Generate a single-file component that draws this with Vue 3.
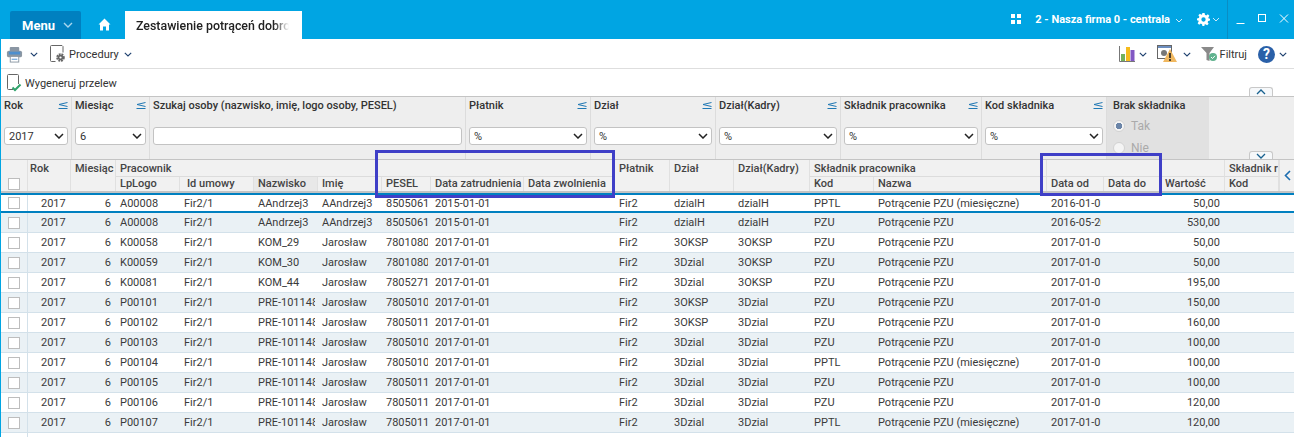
<script setup>
const cols = [27, 43, 45, 64, 74, 64, 64, 49, 93, 91, 55, 64, 76, 64, 173, 57, 57, 64, 54];
const grid = { gridTemplateColumns: cols.map((c) => c + 'px').join(' ') };
const mk = (lp, nz, im, pe, zat, d1, d2, kod, wart, od) => ({ lp, nz, im, pe, zat, d1, d2, kod, wart, od });
const rows = [
  mk('A00008', 'AAndrzej3', 'AAndrzej3', '8505061', '2015-01-01', 'dzialH', 'dzialH', 'PPTL', '50,00', '2016-01-01'),
  mk('A00008', 'AAndrzej3', 'AAndrzej3', '8505061', '2015-01-01', 'dzialH', 'dzialH', 'PZU', '530,00', '2016-05-20'),
  mk('K00058', 'KOM_29', 'Jarosław', '7801080', '2017-01-01', '3OKSP', '3OKSP', 'PZU', '50,00', '2017-01-01'),
  mk('K00059', 'KOM_30', 'Jarosław', '7801080', '2017-01-01', '3Dzial', '3OKSP', 'PZU', '50,00', '2017-01-01'),
  mk('K00081', 'KOM_44', 'Jarosław', '7805271', '2017-01-01', '3Dzial', '3OKSP', 'PZU', '195,00', '2017-01-01'),
  mk('P00101', 'PRE-101148', 'Jarosław', '7805010', '2017-01-01', '3OKSP', '3Dzial', 'PZU', '150,00', '2017-01-01'),
  mk('P00102', 'PRE-101148', 'Jarosław', '7805011', '2017-01-01', '3OKSP', '3Dzial', 'PZU', '160,00', '2017-01-01'),
  mk('P00103', 'PRE-101148', 'Jarosław', '7805010', '2017-01-01', '3Dzial', '3Dzial', 'PZU', '100,00', '2017-01-01'),
  mk('P00104', 'PRE-101148', 'Jarosław', '7805010', '2017-01-01', '3Dzial', '3Dzial', 'PPTL', '100,00', '2017-01-01'),
  mk('P00105', 'PRE-101148', 'Jarosław', '7805011', '2017-01-01', '3Dzial', '3Dzial', 'PZU', '100,00', '2017-01-01'),
  mk('P00106', 'PRE-101148', 'Jarosław', '7805011', '2017-01-01', '3Dzial', '3Dzial', 'PZU', '120,00', '2017-01-01'),
  mk('P00107', 'PRE-101148', 'Jarosław', '7805011', '2017-01-01', '3Dzial', '3Dzial', 'PPTL', '120,00', '2017-01-01'),
];
const nazwa = (k) => (k === 'PPTL' ? 'Potrącenie PZU (miesięczne)' : 'Potrącenie PZU');
const filters = [
  { label: 'Rok', w: 71, value: '2017', sel: true },
  { label: 'Miesiąc', w: 78, value: '6', sel: true },
  { label: 'Szukaj osoby (nazwisko, imię, logo osoby, PESEL)', w: 316, input: true },
  { label: 'Płatnik', w: 125, value: '%', sel: true },
  { label: 'Dział', w: 125, value: '%', sel: true },
  { label: 'Dział(Kadry)', w: 125, value: '%', sel: true },
  { label: 'Składnik pracownika', w: 141, value: '%', sel: true },
  { label: 'Kod składnika', w: 125, value: '%', sel: true },
];
const heads = [
  ['LpLogo', 'l2'], ['Id umowy', 'l2 ctr'], ['Nazwisko', 'l2 hot'], ['Imię', 'l2'], ['PESEL', 'l2'],
  ['Data zatrudnienia', 'l2'], ['Data zwolnienia', 'l2'],
];
</script>

<template>
  <div class="app">
    <header class="titlebar">
      <button class="menu">Menu
        <svg width="10" height="6" viewBox="0 0 10 6"><path d="M1 1l4 4 4-4" fill="none" stroke="#a9d6ee" stroke-width="1.4"/></svg>
      </button>
      <svg class="home" width="13" height="13" viewBox="0 0 13 13"><path d="M6.5 .5L0.500 6.500H2v6h3V8.500h3v4h3v-6h1.500z" fill="#fff"/></svg>
      <div class="tab"><span>Zestawienie potrąceń dobro</span></div>
      <div class="spacer"></div>
      <svg class="top apps" width="10" height="10" viewBox="0 0 10 10" fill="#fff"><rect width="4" height="4"/><rect x="6" width="4" height="4"/><rect y="6" width="4" height="4"/><rect x="6" y="6" width="4" height="4"/></svg>
      <span class="firm">2 - Nasza firma 0 - centrala</span>
      <svg class="top fchev" width="8" height="5" viewBox="0 0 8 5"><path d="M1 1l3 3 3-3" fill="none" stroke="#cdeafa" stroke-width="1"/></svg>
      <svg class="top gear" width="13" height="13" viewBox="0 0 24 24"><path fill="#fff" fill-rule="evenodd" d="M10 0h4l.7 3.400 2.300 1 3-1.900 2.800 2.800-1.900 3 1 2.300L24 10v4l-3.400.7-1 2.300 1.900 3-2.800 2.800-3-1.900-2.300 1L14 24h-4l-.7-3.400-2.300-1-3 1.900-2.800-2.800 1.900-3-1-2.300L0 14v-4l3.400-.7 1-2.300-1.900-3L5.300 1.200l3 1.900 1-.9.700-2.200zM12 8a4 4 0 100 8 4 4 0 000-8z"/></svg>
      <svg class="top gchev" width="8" height="5" viewBox="0 0 8 5"><path d="M1 1l3 3 3-3" fill="none" stroke="#cdeafa" stroke-width="1"/></svg>
      <div class="winctl">
        <svg width="10" height="10" viewBox="0 0 10 10"><path d="M1.500 9.500h8" stroke="#fff"/></svg>
        <svg width="10" height="10" viewBox="0 0 10 10"><rect x="1.500" y=".5" width="7" height="7" fill="none" stroke="#fff"/></svg>
        <svg width="10" height="10" viewBox="0 0 10 10"><path d="M1 .5l8 8M9 .5l-8 8" stroke="#fff" fill="none"/></svg>
      </div>
    </header>

    <div class="main">
      <div class="toolbar">
        <svg width="17" height="17" viewBox="0 0 18 18">
          <rect x="4" y="1" width="10" height="5" rx="1" fill="#8a96a3"/>
          <rect x="1" y="5" width="16" height="7" rx="2" fill="#8b97a3"/>
          <rect x="3" y="6" width="12" height="3" fill="#4d8fce"/>
          <rect x="4.500" y="11" width="9" height="6" fill="#fff" stroke="#8b97a3"/>
          <path d="M6 14h6" stroke="#4d8fce"/>
        </svg>
        <svg class="chev pchev" width="8" height="5" viewBox="0 0 8 5"><path d="M.8.8L4 4l3.200-3.200" fill="none" stroke="#1d3f6e" stroke-width="1.100"/></svg>
        <svg class="proc" width="16" height="18" viewBox="0 0 16 18">
          <path d="M8 .5H1.500a1 1 0 00-1 1v14a1 1 0 001 1h4M8 .5h4l1 1v6" fill="none" stroke="#666"/>
          <circle cx="10.500" cy="12.500" r="3.200" fill="none" stroke="#666" stroke-width="2.200" stroke-dasharray="1.800 .8"/>
          <circle cx="10.500" cy="12.500" r="2.800" fill="#666"/><circle cx="10.500" cy="12.500" r="1.100" fill="#fff"/>
        </svg>
        <span class="tlabel">Procedury</span>
        <svg class="chev" width="8" height="5" viewBox="0 0 8 5"><path d="M.8.8L4 4l3.200-3.200" fill="none" stroke="#1d3f6e" stroke-width="1.100"/></svg>
        <div class="spacer"></div>
        <svg class="bars" width="16" height="16" viewBox="0 0 16 16">
          <path d="M.5 0v15.500H16" fill="none" stroke="#777"/>
          <rect x="2" y="8" width="4" height="7" fill="#72b05d"/>
          <rect x="7" y="1" width="4" height="14" fill="#f5bb1c"/>
          <rect x="11.500" y="4" width="4" height="11" fill="#8258c4"/>
        </svg>
        <svg class="chev" width="8" height="5" viewBox="0 0 8 5"><path d="M.8.8L4 4l3.200-3.200" fill="none" stroke="#1d3f6e" stroke-width="1.100"/></svg>
        <svg class="warn" width="20" height="18" viewBox="0 0 20 18">
          <rect x=".5" y=".5" width="14" height="13" fill="#fff" stroke="#666"/>
          <rect x="1" y="1" width="13" height="2" fill="#6c8ebf"/>
          <circle cx="7" cy="8" r="3" fill="#777"/>
          <path d="M13 4l7 13H6z" fill="#f0b860"/>
          <path d="M13 8v5M13 14v2" stroke="#222" stroke-width="1.600"/>
        </svg>
        <svg class="chev c3" width="8" height="5" viewBox="0 0 8 5"><path d="M.8.8L4 4l3.200-3.200" fill="none" stroke="#1d3f6e" stroke-width="1.100"/></svg>
        <svg class="funnel" width="18" height="16" viewBox="0 0 18 16">
          <path d="M0 1h13L8.500 7v8l-3-1V7z" fill="#8a8a8a"/>
          <circle cx="12" cy="11" r="4" fill="#5fb28d"/>
          <path d="M10 11l1.500 1.500L14 9.800" stroke="#fff" fill="none"/>
        </svg>
        <span class="tlabel filt">Filtruj</span>
        <span class="help">?</span>
        <svg class="chev c4" width="8" height="5" viewBox="0 0 8 5"><path d="M.8.8L4 4l3.200-3.200" fill="none" stroke="#1d3f6e" stroke-width="1.100"/></svg>
      </div>

      <div class="actions">
        <svg width="18" height="18" viewBox="0 0 18 18">
          <path d="M6 15.500H1.500a1 1 0 01-1-1V1.500a1 1 0 011-1h9a1 1 0 011 1V10" fill="none" stroke="#666"/>
          <path d="M5.500 13.500l2.500 2.500 5.500-5.500" fill="none" stroke="#2fa36b" stroke-width="2"/>
        </svg>
        <span class="tlabel">Wygeneruj przelew</span>
        <span class="collapse up"><svg width="10" height="6" viewBox="0 0 10 6"><path d="M1 5l4-4 4 4" fill="none" stroke="#17618f" stroke-width="1.300"/></svg></span>
      </div>

      <section class="filters">
        <div v-for="f in filters" :key="f.label" class="filter" :style="{ width: f.w + 'px' }">
          <div class="flabel">
            <span>{{ f.label }}</span>
            <svg v-if="f.sel" width="10" height="7" viewBox="0 0 10 7"><path d="M9.500.5L1 2.500l8.500 2M.5 6.500h9" fill="none" stroke="#1f78b4"/></svg>
          </div>
          <div class="fctl">
            <span class="fval">{{ f.value }}</span>
            <svg v-if="f.sel" width="10" height="6" viewBox="0 0 10 6"><path d="M1 1l4 4 4-4" fill="none" stroke="#222" stroke-width="1.500"/></svg>
          </div>
        </div>
        <div class="filter off">
          <div class="flabel"><span>Brak składnika</span></div>
          <label class="radio"><i class="on"></i>Tak</label>
          <label class="radio"><i></i>Nie</label>
        </div>
        <div class="frest"></div>
        <span class="collapse down"><svg width="10" height="6" viewBox="0 0 10 6"><path d="M1 1l4 4 4-4" fill="none" stroke="#17618f" stroke-width="1.300"/></svg></span>
      </section>

      <section class="table">
        <div class="thead" :style="grid">
          <div class="th cb"><i class="check"></i></div>
          <div class="th tall rok">Rok</div>
          <div class="th tall">Miesiąc</div>
          <div class="th group" style="grid-column: span 7">Pracownik</div>
          <div class="th tall" >Płatnik</div>
          <div class="th tall">Dział</div>
          <div class="th tall">Dział(Kadry)</div>
          <div class="th group" style="grid-column: span 2">Składnik pracownika</div>
          <div class="th group" style="grid-column: span 3"></div>
          <div class="th group clip">Składnik r</div>
          <div v-for="h in heads" :key="h[0]" class="th" :class="h[1]">{{ h[0] }}</div>
          <div class="th l2">Kod</div>
          <div class="th l2">Nazwa</div>
          <div class="th l2">Data od</div>
          <div class="th l2">Data do</div>
          <div class="th l2">Wartość</div>
          <div class="th l2">Kod</div>
        </div>
        <div class="tbody">
          <div v-for="(r, i) in rows" :key="i" class="row" :class="{ alt: i % 2 === 1, cur: i === 0 }" :style="grid">
            <div class="td cb"><i class="check"></i></div>
            <div class="td ctr">2017</div>
            <div class="td rt">6</div>
            <div class="td">{{ r.lp }}</div>
            <div class="td">Fir2/1</div>
            <div class="td">{{ r.nz }}</div>
            <div class="td">{{ r.im }}</div>
            <div class="td">{{ r.pe }}</div>
            <div class="td">{{ r.zat }}</div>
            <div class="td"></div>
            <div class="td">Fir2</div>
            <div class="td">{{ r.d1 }}</div>
            <div class="td">{{ r.d2 }}</div>
            <div class="td">{{ r.kod }}</div>
            <div class="td">{{ nazwa(r.kod) }}</div>
            <div class="td">{{ r.od }}</div>
            <div class="td"></div>
            <div class="td rt">{{ r.wart }}</div>
            <div class="td"></div>
          </div>
          <div class="rowend"></div>
        </div>
        <div class="side"><svg width="7" height="11" viewBox="0 0 7 11"><path d="M6 1L1.500 5.500 6 10" fill="none" stroke="#1c6db0" stroke-width="1.600"/></svg></div>
      </section>

      <div class="mark m1"></div>
      <div class="mark m2"></div>
    </div>
  </div>
</template>

<style scoped>
.app { width: 1294px; height: 437px; overflow: hidden; font: 11px Roboto, sans-serif; color: #333; background: #fff; display: flex; flex-direction: column; }
.spacer { flex: 1; }
.titlebar { height: 39px; flex: none; background: #00a5e3; display: flex; align-items: flex-end; padding-left: 10px; }
.menu { width: 71px; height: 28px; background: #0080c0; border: 0; border-radius: 2px 2px 0 0; color: #fff; font: 700 13px Roboto, sans-serif; display: flex; align-items: center; gap: 8px; padding: 0 0 0 12px; }
.home { margin: 0 0 8px 17px; }
.tab { margin-left: 14px; width: 177px; height: 28px; background: #fff; color: #222; font-weight: 500; font-size: 12.4px; display: flex; align-items: center; padding-left: 11px; box-sizing: border-box; }
.tab span { width: 153px; white-space: nowrap; overflow: hidden; -webkit-mask-image: linear-gradient(90deg, #000 90%, transparent); mask-image: linear-gradient(90deg, #000 90%, transparent); }
.top { align-self: flex-start; flex: none; }
.apps { margin-top: 14px; }
.firm { align-self: flex-start; margin: 12px 0 0 14px; color: #fff; font-weight: 700; font-size: 11px; line-height: 15px; white-space: nowrap; }
.fchev { margin: 18px 0 0 5px; }
.gear { margin: 13px 0 0 14px; }
.gchev { margin: 17px 0 0 2px; }
.winctl { align-self: flex-start; height: 39px; margin-left: 7px; width: 67px; border-left: 1px solid #0a8dc4; box-sizing: border-box; padding: 14px 0 0 7px; display: flex; gap: 12px; }
.winctl svg { flex: none; }
.main { position: relative; flex: 1; border-left: 1px solid #00a5e3; min-height: 0; }
.toolbar { height: 30px; box-sizing: border-box; border-bottom: 1px solid #dedede; display: flex; align-items: center; padding: 1px 7px 0 5px; }
.chev { flex: none; }
.pchev { margin-left: 7px; }
.proc { margin-left: 12px; }
.tlabel { color: #333; font-size: 11px; white-space: nowrap; }
.toolbar .tlabel { margin: 0 5px 0 3px; }
.bars { margin-right: 4px; }
.warn { margin-left: 10px; }
.c3 { margin-left: 6px; }
.funnel { margin-left: 10px; }
.toolbar .filt { margin: 0 0 0 1px; }
.help { margin-left: 11px; width: 17px; height: 17px; border-radius: 50%; background: #2a60a8; color: #fff; font: 700 14px/17px Roboto, sans-serif; text-align: center; }
.c4 { margin-left: 4px; }
.actions { height: 28px; box-sizing: border-box; border-bottom: 1px solid #c4c4c4; display: flex; align-items: center; padding: 1px 0 0 6px; position: relative; }
.collapse { position: absolute; width: 24px; border: 1px solid #c8c8c8; border-bottom: 0; border-radius: 3px 3px 0 0; background: #f6f8fa; right: 21px; bottom: 0; display: flex; align-items: center; justify-content: center; box-sizing: border-box; }
.collapse.up { height: 9px; }
.collapse.down { height: 8px; }
.filters { height: 63px; background: #eeeeee; border-bottom: 1px solid #c4c4c4; box-sizing: border-box; display: flex; position: relative; }
.filter { flex: none; box-sizing: border-box; border-right: 1px solid #dcdcdc; padding: 1px 3px 0 3px; }
.flabel { display: flex; justify-content: space-between; align-items: center; font-weight: 500; color: #333; height: 15px; line-height: 15px; white-space: nowrap; }
.fctl { margin-top: 14px; height: 18px; background: #fff; border: 1px solid #c3c3c3; border-radius: 3px; box-sizing: border-box; display: flex; align-items: center; justify-content: space-between; padding: 0 3px 0 4px; }
.fval { color: #333; }
.off { width: 102px; background: #e1e1e1; border-right: 0; padding-left: 6px; overflow: hidden; }
.off .flabel { margin-bottom: 2px; }
.frest { flex: 1; }
.radio { display: flex; align-items: center; gap: 6px; color: #aaa; height: 22px; font-size: 12px; }
.radio i { width: 12px; height: 12px; border-radius: 50%; background: #f4f4f4; border: 1px solid #d2d2d2; box-sizing: border-box; display: block; }
.radio i.on { background: radial-gradient(circle, #6b85a8 0 3px, #f4f4f4 3.500px); }
.table { position: relative; height: 277px; overflow: hidden; }
.thead { display: grid; grid-template-rows: 17px 14px; height: 31px; background: #f1f1f1; }
.th { font-weight: 500; color: #444; padding: 1px 0 0 4px; line-height: 15px; white-space: nowrap; overflow: hidden; border-right: 1px solid #e0e0e0; box-sizing: border-box; }
.th.tall, .th.cb { grid-row: span 2; }
.th.cb { padding: 18px 0 0 7px; }
.th.rok { padding-left: 2px; }
.th.group { border-bottom: 1px solid #dcdcdc; }
.th.l2 { line-height: 14px; padding-top: 0; }
.th.ctr { padding-left: 7px; }
.th.hot { background: #e8e8e8; }
.tbody { border-top: 2px solid #c4c4c4; position: relative; }
.row { display: grid; height: 20px; box-sizing: border-box; border-bottom: 1px solid #d3e1ea; background: #fff; }
.row.alt { background: #eaf1f5; }
.row.cur { border-top: 2px solid #0080c0; border-bottom: 2px solid #0080c0; }
.td { padding: 0 0 0 4px; border-right: 3px solid transparent; line-height: 20px; overflow: hidden; white-space: nowrap; color: #3a3a3a; box-sizing: border-box; }
.cur .td { line-height: 17px; }
.td.cb { border-right: 1px solid #d3e1ea; padding: 4px 0 0 7px; }
.cur .td.cb { padding-top: 2px; }
.td.ctr { padding-left: 13px; }
.td.rt { text-align: right; padding-right: 2px; }
.check { display: block; width: 12px; height: 12px; background: #fff; border: 1px solid #bdbdbd; box-sizing: border-box; }
.rowend { width: 27px; height: 4px; border-right: 1px solid #d3e1ea; box-sizing: border-box; }
.side { position: absolute; right: 0; top: 0; width: 15px; height: 31px; background: #f1f1f1; display: flex; align-items: center; justify-content: center; border-left: 1px solid #e0e0e0; box-sizing: border-box; }
.mark { position: absolute; border: 3px solid #3f3fc7; box-sizing: border-box; pointer-events: none; }
.m1 { left: 374px; top: 111px; width: 240px; height: 48px; }
.m2 { left: 1039px; top: 114px; width: 122px; height: 43px; }
</style>
